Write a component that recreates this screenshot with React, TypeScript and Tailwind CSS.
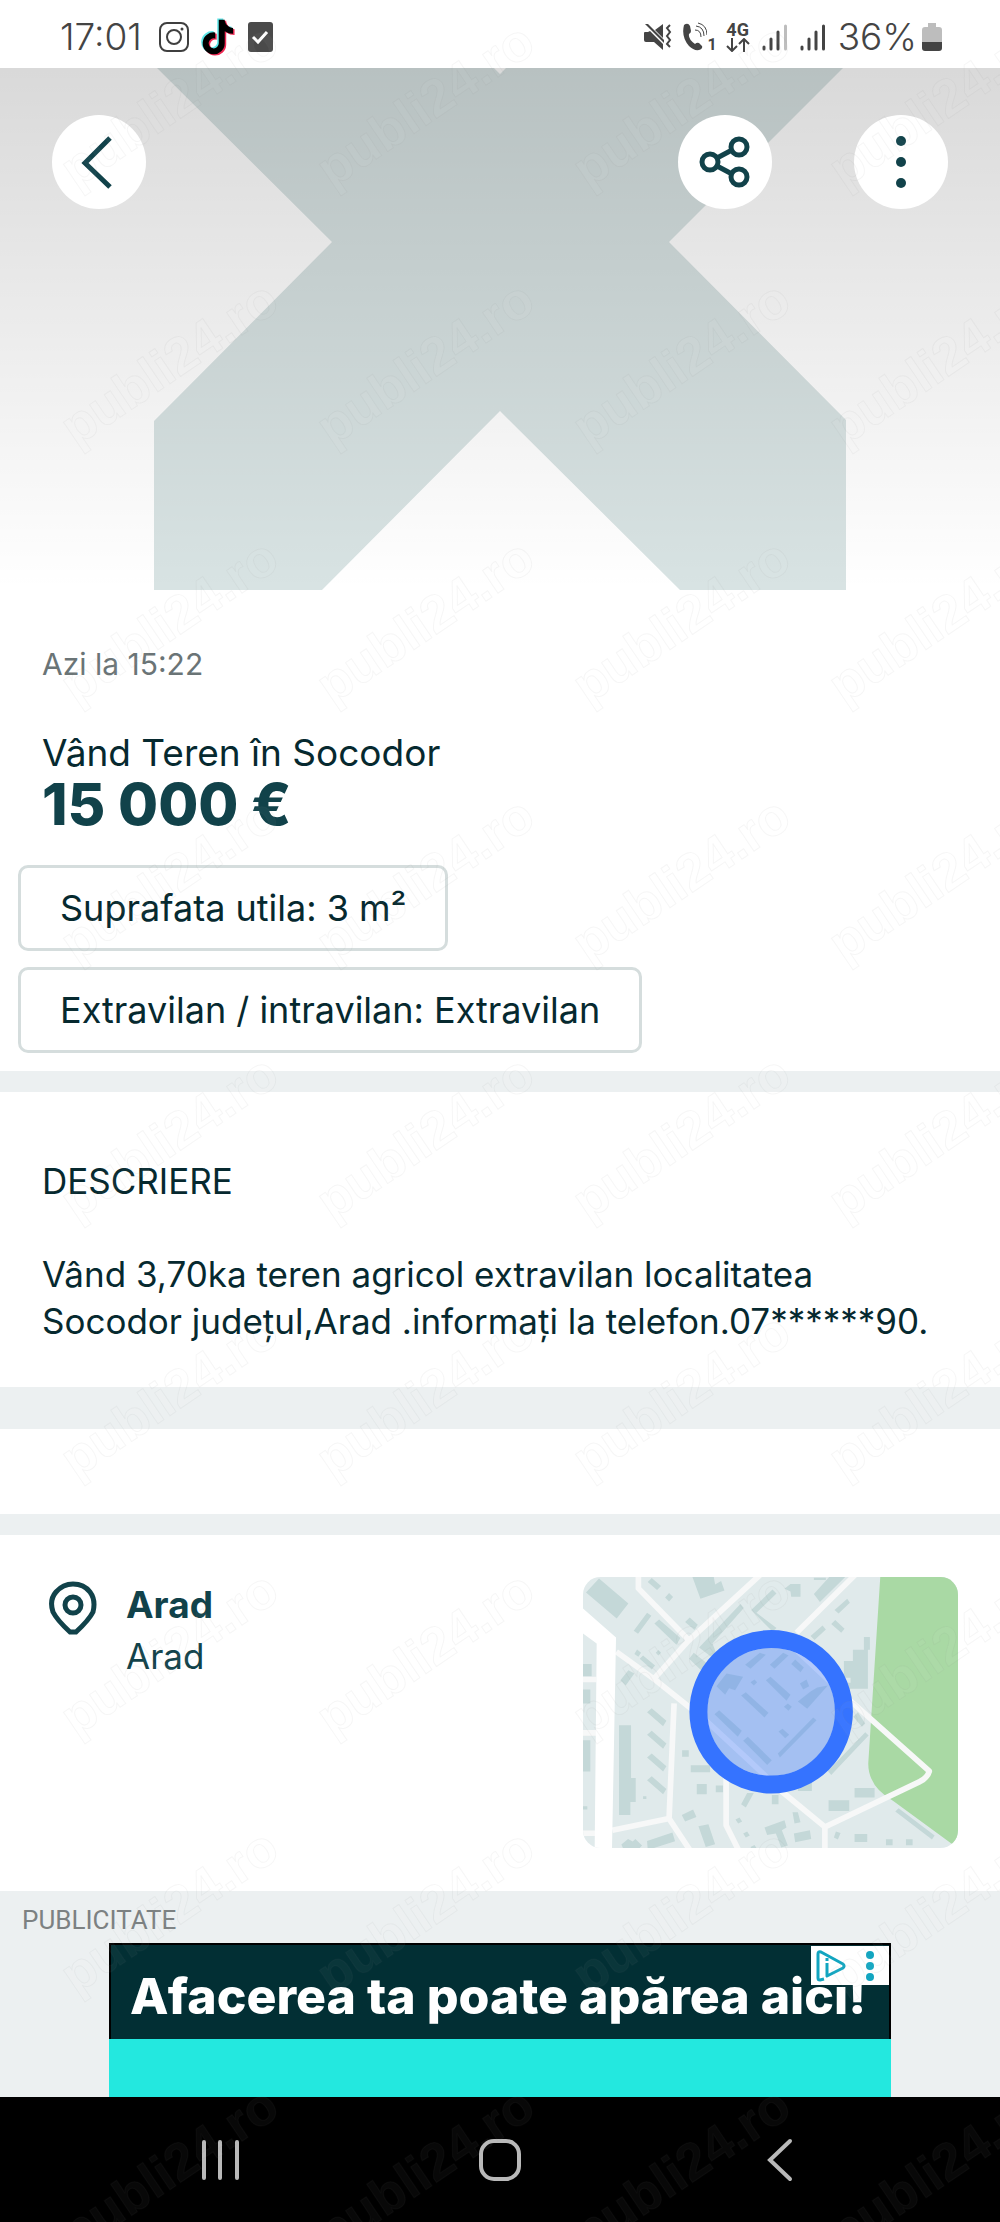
import type { ReactNode } from "react"

const TIKTOK_PATH =
  "M448 209.91a210.06 210.06 0 0 1-122.77-39.25V349.38A162.55 162.55 0 1 1 185 188.31V278.2a74.62 74.62 0 1 0 52.23 71.18V0l88 0a121.18 121.18 0 0 0 1.86 22.17h0A122.18 122.18 0 0 0 381 102.39a121.43 121.43 0 0 0 67 20.14z"

const attributes = ["Suprafata utila: 3 m²", "Extravilan / intravilan: Extravilan"]

function SignalBars({ weak = false }: { weak?: boolean }) {
  return (
    <svg className="h-[30px] w-[26px]" viewBox="0 0 26 30" stroke="#444" strokeWidth="3" strokeLinecap="round">
      <path d="M2 25v2M9 17v10M16 10v17" />
      <path d="M23.500 4v23" stroke={weak ? "#bdbdbd" : "#444"} />
    </svg>
  )
}

function StatusBar() {
  return (
    <header className="flex h-[68px] items-center justify-between bg-white pt-[6px] pr-[58px] pl-[60px] text-[#444]">
      <div className="flex items-center">
        <span className="w-[98px] text-[37px] leading-[40px] font-light">17:01</span>
        <svg className="h-[32px] w-[32px]" viewBox="0 0 32 32" fill="none" stroke="#3f3f3f" strokeWidth="2">
          <rect x="2" y="2" width="28" height="28" rx="7" />
          <circle cx="16" cy="16" r="7" />
          <circle cx="24" cy="8" r="1.500" fill="#3f3f3f" strokeWidth="0" />
        </svg>
        <svg className="ml-[11px] h-[38px] w-[34px]" viewBox="-24 -24 500 560">
          <path d={TIKTOK_PATH} fill="#5ee6e8" transform="translate(-22 -18)" />
          <path d={TIKTOK_PATH} fill="#ee2a54" transform="translate(22 18)" />
          <path d={TIKTOK_PATH} fill="#000" />
        </svg>
        <svg className="ml-[13px] h-[30px] w-[25px]" viewBox="0 0 25 30">
          <rect width="25" height="30" rx="3" fill="#4a4a4a" />
          <path d="M5 15l5 5 9-10" fill="none" stroke="#fff" strokeWidth="3" />
        </svg>
      </div>

      <div className="flex items-center">
        {/* Muted with vibration */}
        <svg className="h-[30px] w-[29px]" viewBox="0 0 29 30">
          <path d="M1 11q0-1 1-1h3l2-1 13 13v6l-9-8H3q-2 0-2-2z" fill="#444" />
          <path d="M12 8l8-6v14zM2 2l3 0 16 16v3z" fill="#444" />
          <path d="M27 3l-3 3 3 4-3 4 3 4-3 4 3 3" fill="none" stroke="#444" strokeWidth="2" />
        </svg>
        <div className="ml-[10px] flex items-end">
          <svg className="h-[30px] w-[25px]" viewBox="0 0 25 30">
            <path
              d="M2 3q4-3 6 1l1 5q0 2-2 3-1 5 6 10 2-2 4-1l3 3q1 3-3 4-5 1-10-4Q-1 15 2 3z"
              fill="#444"
            />
            <path d="M13 8q6 0 6 7M14 4q8 1 8 10M16 1q9 2 9 12" fill="none" stroke="#444" strokeWidth="1" />
          </svg>
          <span className="font-['Roboto'] text-[16px] leading-[14px] font-bold">1</span>
        </div>
        <div className="ml-[9px] flex flex-col items-center">
          <span className="font-['Roboto'] text-[18px] leading-[16px] font-bold">4G</span>
          <svg className="h-[14px] w-[24px]" viewBox="0 0 24 14" fill="none" stroke="#444" strokeWidth="2">
            <path d="M6 0v12M1 8l5 5 5-5M18 14V2M13 6l5-5 5 5" />
          </svg>
        </div>
        <div className="ml-[12px] flex gap-[12px]">
          <SignalBars weak />
          <SignalBars />
        </div>
        <span className="ml-[12px] text-[37px] leading-[40px] font-light">36%</span>
        <svg className="ml-[5px] h-[30px] w-[20px]" viewBox="0 0 20 30">
          <path d="M6 1h8v4h3q3 0 3 3v12H0V8q0-3 3-3h3z" fill="#bdbdbd" />
          <path d="M0 20h20v6q0 3-3 3H3q-3 0-3-3z" fill="#444" />
        </svg>
      </div>
    </header>
  )
}

function RoundButton({ label, children }: { label: string; children: ReactNode }) {
  return (
    <button
      type="button"
      aria-label={label}
      className="flex h-[94px] w-[94px] items-center justify-center rounded-full bg-white"
    >
      {children}
    </button>
  )
}

function Hero() {
  return (
    <div className="relative h-[522px] overflow-hidden bg-white">
      <svg className="mx-auto h-[522px] w-[692px]" viewBox="0 0 692 522">
        <path
          d="M3 0H340L346 6 352 0H689L515 174 692 352V522H526L346 343 168 522H0V353L178 174z"
          fill="#d8e3e3"
        />
      </svg>
      <div className="absolute inset-0 bg-linear-to-b from-black/15 to-transparent">
        <div className="flex items-center justify-between px-[52px] pt-[47px]">
          <RoundButton label="Înapoi">
            <svg className="h-[54px] w-[54px]" viewBox="0 0 54 54" fill="none" stroke="#11424a" strokeWidth="5">
              <path d="M38 3L13 28l25 24" />
            </svg>
          </RoundButton>
          <div className="flex gap-[82px]">
            <RoundButton label="Distribuie">
              <svg className="h-[52px] w-[52px]" viewBox="0 0 52 52" fill="none" stroke="#11424a" strokeWidth="5">
                <circle cx="11" cy="26" r="8" />
                <circle cx="40" cy="11" r="8" />
                <circle cx="40" cy="41" r="8" />
                <path d="M18 22l15-8M18 30l15 8" />
              </svg>
            </RoundButton>
            <RoundButton label="Mai multe">
              <svg className="h-[52px] w-[12px]" viewBox="0 0 12 52" fill="#11424a">
                <circle cx="6" cy="5" r="5" />
                <circle cx="6" cy="26" r="5" />
                <circle cx="6" cy="47" r="5" />
              </svg>
            </RoundButton>
          </div>
        </div>
      </div>
    </div>
  )
}

function LocationMap() {
  return (
    <svg className="h-[271px] w-[375px] shrink-0" viewBox="70 51 1124 812" role="img" aria-label="Hartă Arad">
      <defs>
        <clipPath id="map-frame">
          <rect x="70" y="51" width="1124" height="812" rx="52" />
        </clipPath>
      </defs>
      <g clipPath="url(#map-frame)">
        <rect x="70" y="51" width="1124" height="812" fill="#e0eaeb" />
        <path d="M961 51H1194V863L1172 848 1000 722Q925 680 925 610z" fill="#a9d9a4" />
        {/* Buildings */}
        <g fill="#c4d8d8">
          <path d="M118 55l88 75-35 45-92-78zM398 51h64l4 22 18-10 10 28-72 25zM264 66l12-12 28 24-12 12zM316 112l12-13 12 12-12 13zM222 212l40-54 13 9-40 54zM284 190l14-12 64 56-12 20zM376 186l14-14 24 22-10 16zM224 282l8-14 12 10-8 12zM240 296l10-10 36 30-10 12zM288 278l8-8 8 8-8 8z" />
          <path d="M692 72h30v38h-28l-2-16-18-8zM762 102l46-51h48l-76 75zM762 53h36v7h-36zM824 150l38-34 8 12-34 32zM814 192l12-12 28 26-10 12zM752 228l36-32 10 12-34 32zM574 150l64-62 12 12-60 58 60 46-12 10zM418 262l124-130 10 12-94 106 10 26-14 14zM388 296l14-18 42 34-20 18z" />
          <path d="M912 231h18v38h-6v117h-66v-18h14v-15h-20v-50h27v-34h33zM182 360l24-30 18 10-26 36zM262 456l14-12 44 38-10 16zM262 524l14-12 44 38-10 16zM262 592l14-12 44 38-10 16zM262 660l14-12 44 38-10 16zM178 495h36v158h14v72h-16v39h-34zM367 570h20v20h-20zM393 615h58v21h-58zM411 671h30v31h-30zM468 676h22v20h-22z" />
          <path d="M66 312h30v36H66zM66 388h26v42H66zM66 540h26v94H66zM66 738h17v10H66zM804 632l112-116 10 10-112 118zM880 470l14-14 22 34-10 10zM544 732l18-34h20l-24 44zM636 704h20v28h-20zM714 668h42v24h-42zM884 683h60v29h-60zM806 720h62v32h-62zM884 821h38v24h-38zM978 837h20v18h-20zM1038 837h20v18h-20zM1006 754l10-10 108 82-8 12zM822 832l6-18 14 4-8 20z" />
          <path d="M366 764l34-16 10 22-34 14zM416 798l30-6 20 60-28 8zM262 842l76-25 8 26-82 26zM185 853l20-17 14 8 8-8 20 20-10 10h-46zM614 802l60-22 6 22-14 8 18 46-20 6-16-42-26 4zM698 756h16l8 30-18 4zM702 820l48-10 4 26-48 10zM527 778l12-6 8 12-12 6zM550 820l12-6 8 12-12 6zM572 860l12-6 8 12-12 6zM250 708h10v8h-10z" />
          <path d="M470 378l30-38 50 10-24 40-18-6-12 20zM556 314l44-36 18 6-46 42zM630 314l40-36 16 8-42 40zM694 312l12-14 26 24-10 14zM618 360l14-10 60 54-12 18zM544 406l14-10 68 62-12 14zM464 462l14-12 68 62-12 18zM550 542l14-12 72 70-14 14zM654 580l106-108 10 8-110 112zM714 424l38-30 20-12 32-6-62 70zM720 370l20-12 8 20-18 10zM656 514l12-8 20 18-12 10zM672 440l12-10 12 10-10 12zM572 366l12-8 8 8-10 10z" />
        </g>
        {/* Streets */}
        <g fill="none" stroke="#f7f8f8" strokeWidth="17" strokeLinejoin="round">
          <path d="M236 45v40l150 154M170 275l115 83 150 120 130 120 100 95 130 107v70M285 353l100-110L600 45M885 45L710 218M710 270l170 160 228 203q-5 20-30 32L795 800" />
          <path d="M343 430l-15 345-170 35M328 775l66 100M499 650v145l40 80M60 358h50M60 518h50M60 819h50" />
        </g>
        <path d="M70 145l99 87-12 631h-52l6-613-41-30z" fill="#fff" />
      </g>
      <circle cx="634" cy="455" r="192" fill="#3573ff" fillOpacity="0.35" />
      <circle cx="634" cy="455" r="218" fill="none" stroke="#3573ff" strokeWidth="54" />
    </svg>
  )
}

function AdBanner() {
  return (
    <aside className="bg-[#ecf0f1] pt-[14px]">
      <p className="px-[22px] font-['Roboto'] text-[26px] leading-[30px] text-[#7c8182]">PUBLICITATE</p>
      <div className="relative mx-[109px] mt-[8px]">
        <div className="flex h-[96px] items-center overflow-hidden border-2 border-b-0 border-black bg-[#022f34] pt-[8px] pl-[19px] text-[50px] leading-[60px] font-extrabold whitespace-nowrap text-white">
          Afacerea ta poate apărea aici!
        </div>
        <div className="h-[58px] bg-[#23e8df]" />
        <button
          type="button"
          aria-label="Opțiuni anunț"
          className="absolute top-[3px] right-[2px] flex h-[39px] w-[78px] items-center justify-between bg-white pr-[15px] pl-[5px]"
        >
          <svg className="h-[32px] w-[30px]" viewBox="0 0 30 32" fill="none" stroke="#12a5c0" strokeWidth="3">
            <path d="M8 29l-4 1q-2 0-2-2V4q0-3 3-2l22 12q2 2 0 4L11 26V13" strokeLinejoin="round" />
            <path d="M11 8v3" />
          </svg>
          <svg className="h-[30px] w-[8px]" viewBox="0 0 8 30" fill="#12a5c0">
            <circle cx="4" cy="4" r="4" />
            <circle cx="4" cy="15" r="4" />
            <circle cx="4" cy="26" r="4" />
          </svg>
        </button>
      </div>
    </aside>
  )
}

function SystemNav() {
  return (
    <nav className="grid h-[125px] grid-cols-3 items-center justify-items-center bg-black px-20">
      <button type="button" aria-label="Aplicații recente">
        <svg className="h-[42px] w-[40px]" viewBox="0 0 40 42" stroke="#b9b9b9" strokeWidth="4" strokeLinecap="round">
          <path d="M4 3v36M20 3v36M37 3v36" />
        </svg>
      </button>
      <button type="button" aria-label="Acasă">
        <svg className="h-[44px] w-[44px]" viewBox="0 0 44 44" fill="none" stroke="#b9b9b9" strokeWidth="4">
          <rect x="3" y="3" width="38" height="38" rx="13" />
        </svg>
      </button>
      <button type="button" aria-label="Înapoi">
        <svg className="h-[44px] w-[26px]" viewBox="0 0 26 44" fill="none" stroke="#b9b9b9" strokeWidth="4" strokeLinecap="round">
          <path d="M23 3L3 22l20 19" />
        </svg>
      </button>
    </nav>
  )
}

function Watermark() {
  return (
    <svg className="pointer-events-none absolute inset-0 h-full w-full" aria-hidden="true">
      <defs>
        <pattern id="watermark" x="40" y="0" width="256" height="258" patternUnits="userSpaceOnUse">
          <text
            transform="translate(36 189) rotate(-34)"
            fontFamily="Liberation Sans, sans-serif"
            fontSize="52"
            fontWeight="bold"
            fill="#fff"
            fillOpacity="0.03"
            stroke="#606060"
            strokeOpacity="0.06"
          >
            publi24.ro
          </text>
        </pattern>
      </defs>
      <rect x="40" width="100%" height="100%" fill="url(#watermark)" />
    </svg>
  )
}

export default function App() {
  return (
    <div className="relative bg-white font-['Inter',sans-serif] text-[#06292f]">
      <StatusBar />
      <main>
        <Hero />

        <section className="pt-[54px] pb-[18px]">
          <div className="px-[42px]">
            <p className="text-[30px] leading-[40px] text-[#6a7476]">Azi la 15:22</p>
            <h1 className="mt-[45px] text-[37px] leading-[47px]">Vând Teren în Socodor</h1>
            <p className="text-[58px] leading-[56px] font-extrabold text-[#11424a]">15 000 €</p>
          </div>
          <ul className="mt-[33px] flex flex-col items-start gap-4 px-[18px]">
            {attributes.map((attribute) => (
              <li
                key={attribute}
                className="flex h-[86px] items-center rounded-[10px] border-3 border-[#d5dddd] px-[39px] text-[36px] leading-[47px]"
              >
                {attribute}
              </li>
            ))}
          </ul>
        </section>

        <div className="h-[21px] bg-[#ecf0f1]" />

        <section className="px-[42px] pt-[66px] pb-[42px] text-[35px] leading-[47px]">
          <h2>DESCRIERE</h2>
          <p className="mt-[46px]">
            Vând 3,70ka teren agricol extravilan localitatea
            <br />
            Socodor județul,Arad .informați la telefon.07******90.
          </p>
        </section>

        <div className="h-[42px] bg-[#ecf0f1]" />
        <div className="h-[85px]" />
        <div className="h-[21px] bg-[#ecf0f1]" />

        <section className="flex items-start justify-between px-[42px] pt-[42px] pb-[43px]">
          <div className="flex items-start gap-[29px] pt-[4px] pl-[7px] text-[#11424a]">
            <svg className="h-[54px] w-[48px]" viewBox="0 0 48 54" fill="none" stroke="#11424a" strokeWidth="5">
              <path d="M24 3Q35 3 41 11T44 31Q40 39 27 51H21Q8 39 4 31-0 19 7 11T24 3z" />
              <circle cx="24" cy="24" r="8" />
            </svg>
            <div className="flex flex-col gap-[5px]">
              <h2 className="text-[37px] leading-[47px] font-bold">Arad</h2>
              <p className="text-[35px] leading-[47px]">Arad</p>
            </div>
          </div>
          <LocationMap />
        </section>

        <AdBanner />
      </main>
      <SystemNav />
      <Watermark />
    </div>
  )
}
